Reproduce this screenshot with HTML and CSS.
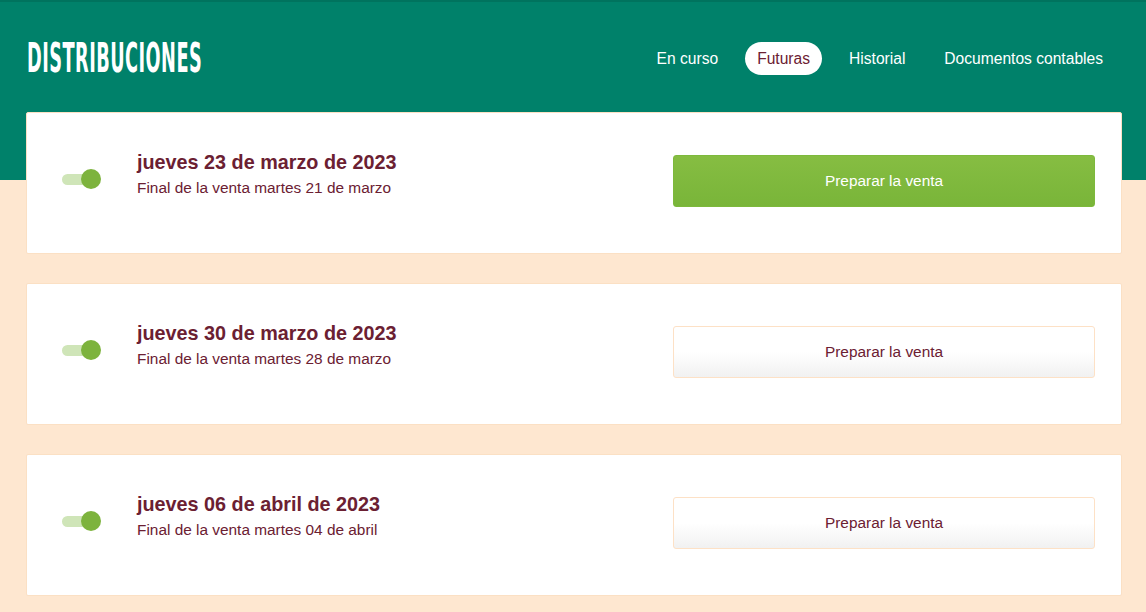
FILE: index.html
```html
<!DOCTYPE html>
<html lang="es">
<head>
<meta charset="utf-8">
<title>Distribuciones</title>
<link rel="stylesheet" href="styles.css">
</head>
<body>
<div class="page">
  <header class="topbar">
    <h1 class="brand"><span>DISTRIBUCIONES</span></h1>
    <nav class="tabs">
      <a class="tab">En curso</a>
      <a class="tab active">Futuras</a>
      <a class="tab">Historial</a>
      <a class="tab">Documentos contables</a>
    </nav>
  </header>
  <main class="list">
    <section class="card">
      <span class="toggle"><span class="knob"></span></span>
      <div class="info">
        <div class="date">jueves 23 de marzo de 2023</div>
        <div class="sub">Final de la venta martes 21 de marzo</div>
      </div>
      <button class="btn primary">Preparar la venta</button>
    </section>
    <section class="card">
      <span class="toggle"><span class="knob"></span></span>
      <div class="info">
        <div class="date">jueves 30 de marzo de 2023</div>
        <div class="sub">Final de la venta martes 28 de marzo</div>
      </div>
      <button class="btn">Preparar la venta</button>
    </section>
    <section class="card">
      <span class="toggle"><span class="knob"></span></span>
      <div class="info">
        <div class="date">jueves 06 de abril de 2023</div>
        <div class="sub">Final de la venta martes 04 de abril</div>
      </div>
      <button class="btn">Preparar la venta</button>
    </section>
  </main>
</div>
</body>
</html>
```
FILE: styles.css
```css
* { box-sizing: border-box; }
html, body { margin: 0; padding: 0; }
body {
  font-family: "Liberation Sans", Arial, sans-serif;
  background: #fee7d0;
  color: #6b2032;
}
.page {
  background: linear-gradient(#00816a 0, #00816a 178px, #fee7d0 178px);
  border-top: 2px solid #00735e;
  min-height: 612px;
}
.topbar {
  height: 110px;
  display: flex;
  align-items: center;
  justify-content: space-between;
  padding: 3px 31px 0 27px;
}
.brand {
  margin: 0;
  font-family: "DejaVu Sans Condensed", "DejaVu Sans", sans-serif;
  font-weight: bold;
  font-size: 41px;
  line-height: 1;
  color: #fff;
  width: 175px;
  white-space: nowrap;
}
.brand span {
  display: inline-block;
  transform: scaleX(0.48);
  transform-origin: left center;
  letter-spacing: 1px;
}
.tabs {
  display: flex;
  align-items: center;
  gap: 15px;
}
.tab {
  font-size: 15.6px;
  color: #fff;
  padding: 8px 12px;
  line-height: 17px;
  border-radius: 17px;
}
.tab.active {
  background: #fff;
  color: #6b2032;
}
.list {
  display: flex;
  flex-direction: column;
  gap: 29px;
  padding: 0 24px 0 26px;
}
.card {
  height: 142px;
  background: #fff;
  border: 1px solid #fbe0c4;
  border-radius: 2px;
  display: flex;
  align-items: center;
  padding: 0 26px 0 35px;
}
.toggle {
  position: relative;
  width: 29px;
  height: 11px;
  border-radius: 6px;
  background: #cfe5b8;
  margin-top: -8px;
  flex: none;
}
.knob {
  position: absolute;
  right: -10px;
  top: -5px;
  width: 20px;
  height: 20px;
  border-radius: 50%;
  background: #7db33d;
}
.info {
  flex: 1;
  margin-left: 46px;
  margin-bottom: 18px;
}
.date {
  font-weight: bold;
  font-size: 19.8px;
  line-height: 24px;
}
.sub {
  font-size: 15.4px;
  line-height: 20px;
  margin-top: 4px;
}
.btn {
  width: 422px;
  height: 52px;
  flex: none;
  margin-bottom: 4px;
  font-family: "Liberation Sans", Arial, sans-serif;
  font-size: 15.4px;
  color: #6b2032;
  border: 1px solid #fde1c6;
  border-radius: 3px;
  background: linear-gradient(#ffffff 0, #ffffff 50%, #f1f1f1 100%);
  cursor: pointer;
}
.btn.primary {
  border: 1px solid #7db93c;
  background: linear-gradient(#86bd42, #79b539);
  color: #fff;
}
```
